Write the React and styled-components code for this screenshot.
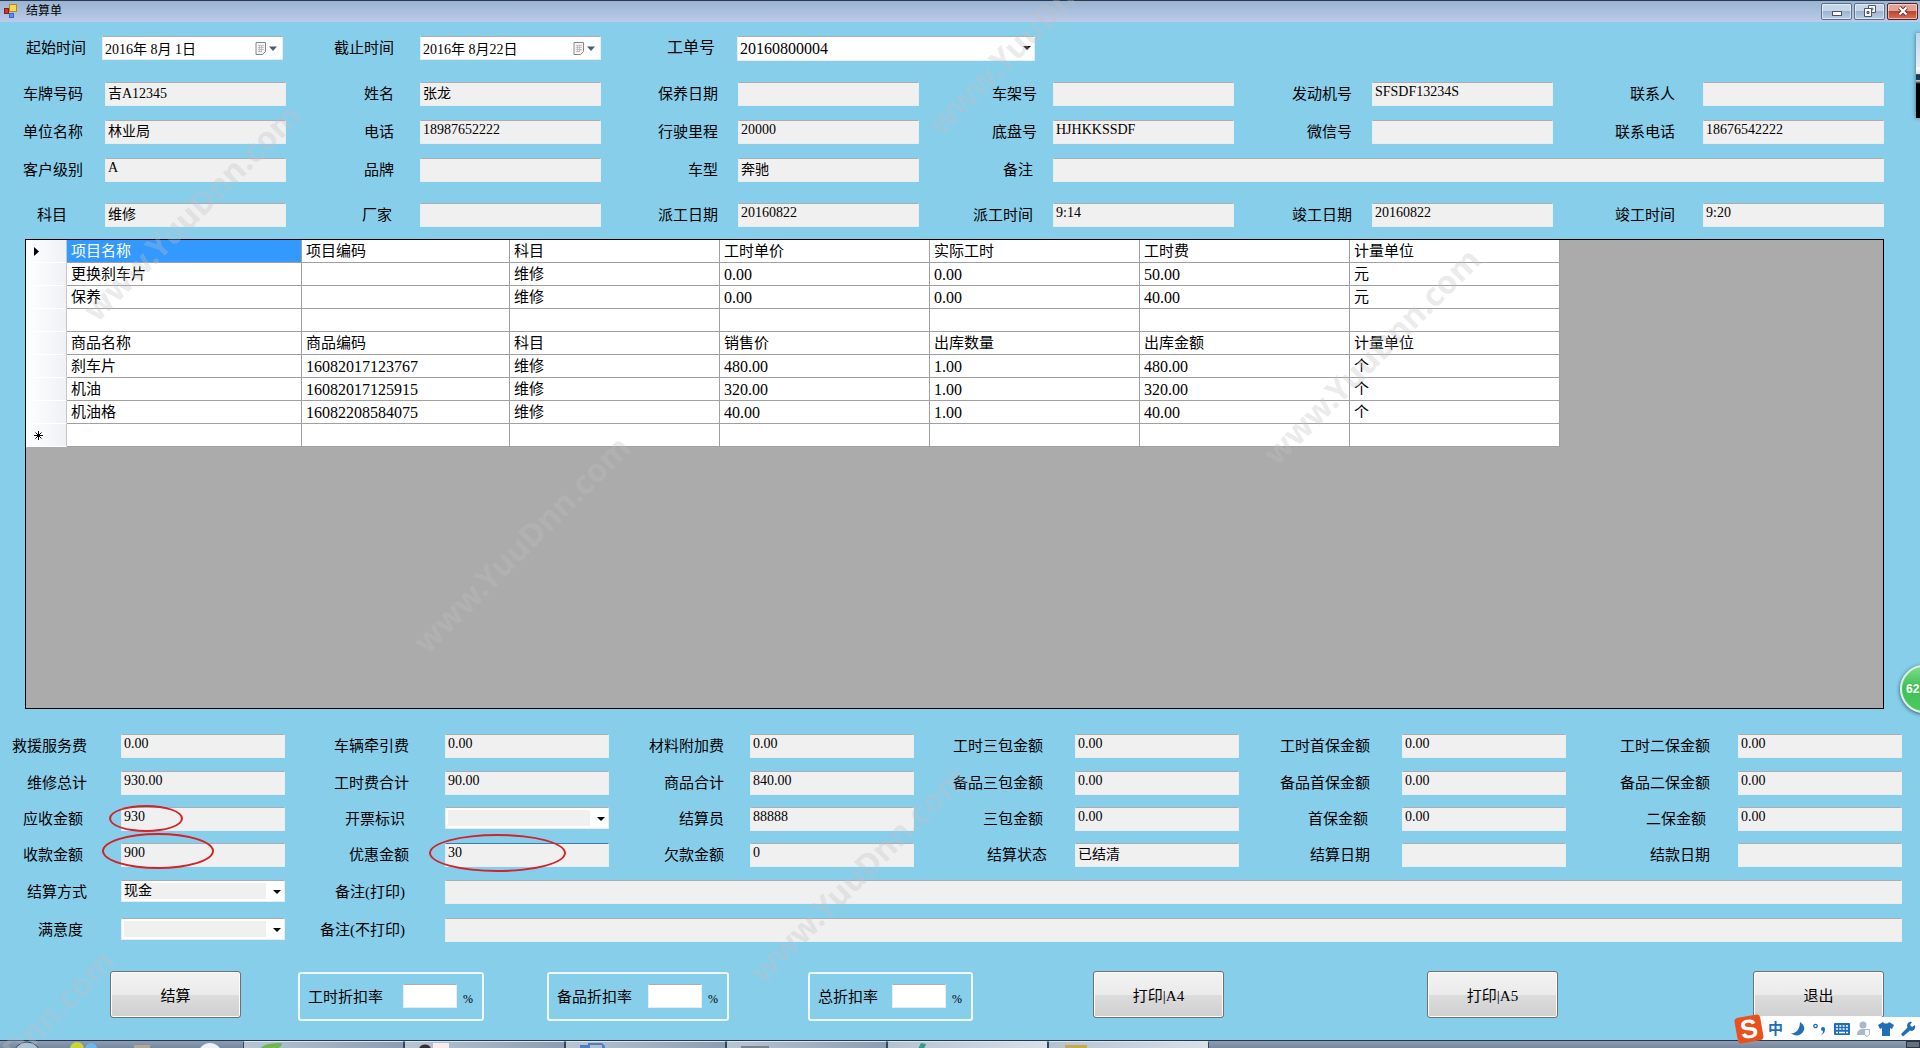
import React from "react";
import styled, { createGlobalStyle, css } from "styled-components";

const topColumns = "105fr 181fr 134fr 181fr 137fr 181fr 134fr 181fr 138fr 181fr 150fr 181fr 36fr";
const filterColumns = "102fr 181fr 137fr 181fr 136fr 298fr 885fr";
const bottomColumns = "121fr 164fr 160fr 164fr 141fr 164fr 161fr 164fr 163fr 164fr 172fr 164fr 18fr";

const customerRows = [
  { id: "plate", label: "车牌号码", value: "吉A12345", gap: 22 },
  { id: "name", label: "姓名", value: "张龙", gap: 26 },
  { id: "careDate", label: "保养日期", value: "", gap: 20 },
  { id: "frameNo", label: "车架号", value: "", gap: 16 },
  { id: "engineNo", label: "发动机号", value: "SFSDF13234S", gap: 20 },
  { id: "contact", label: "联系人", value: "", gap: 28 },
  { id: "company", label: "单位名称", value: "林业局", gap: 22 },
  { id: "phone", label: "电话", value: "18987652222", gap: 26 },
  { id: "mileage", label: "行驶里程", value: "20000", gap: 20 },
  { id: "chassis", label: "底盘号", value: "HJHKKSSDF", gap: 16 },
  { id: "wechat", label: "微信号", value: "", gap: 20 },
  { id: "contactPhone", label: "联系电话", value: "18676542222", gap: 28 },
  { id: "level", label: "客户级别", value: "A", gap: 22 },
  { id: "brand", label: "品牌", value: "", gap: 26 },
  { id: "model", label: "车型", value: "奔驰", gap: 20 },
  { id: "remark", label: "备注", value: "", gap: 20, span: 5 },
];

const workRow = [
  { id: "subject", label: "科目", value: "维修", gap: 38 },
  { id: "factory", label: "厂家", value: "", gap: 28 },
  { id: "dispatchDate", label: "派工日期", value: "20160822", gap: 20 },
  { id: "dispatchTime", label: "派工时间", value: "9:14", gap: 20 },
  { id: "finishDate", label: "竣工日期", value: "20160822", gap: 20 },
  { id: "finishTime", label: "竣工时间", value: "9:20", gap: 28 },
];

const settleRows = [
  { id: "rescue", label: "救援服务费", value: "0.00", gap: 34 },
  { id: "tow", label: "车辆牵引费", value: "0.00", gap: 36 },
  { id: "material", label: "材料附加费", value: "0.00", gap: 26 },
  { id: "hourSb", label: "工时三包金额", value: "0.00", gap: 32 },
  { id: "hourFirst", label: "工时首保金额", value: "0.00", gap: 32 },
  { id: "hourSecond", label: "工时二保金额", value: "0.00", gap: 28 },
  { id: "repairTotal", label: "维修总计", value: "930.00", gap: 34 },
  { id: "hourTotal", label: "工时费合计", value: "90.00", gap: 36 },
  { id: "goodsTotal", label: "商品合计", value: "840.00", gap: 26 },
  { id: "partSb", label: "备品三包金额", value: "0.00", gap: 32 },
  { id: "partFirst", label: "备品首保金额", value: "0.00", gap: 32 },
  { id: "partSecond", label: "备品二保金额", value: "0.00", gap: 28 },
  { id: "receivable", label: "应收金额", value: "930", gap: 38, mark: { x: -12, y: -2, w: 74, h: 27 } },
  { id: "invoice", label: "开票标识", value: "", gap: 40, select: true },
  { id: "clerk", label: "结算员", value: "88888", gap: 26 },
  { id: "sb", label: "三包金额", value: "0.00", gap: 32 },
  { id: "first", label: "首保金额", value: "0.00", gap: 34 },
  { id: "second", label: "二保金额", value: "0.00", gap: 32 },
  { id: "received", label: "收款金额", value: "900", gap: 38, mark: { x: -19, y: -10, w: 112, h: 36 } },
  { id: "discount", label: "优惠金额", value: "30", gap: 36, active: true, mark: { x: -16, y: -9, w: 137, h: 38 } },
  { id: "debt", label: "欠款金额", value: "0", gap: 26 },
  { id: "status", label: "结算状态", value: "已结清", gap: 28 },
  { id: "settleDate", label: "结算日期", value: "", gap: 32 },
  { id: "payDate", label: "结款日期", value: "", gap: 28 },
  { id: "payType", label: "结算方式", value: "现金", gap: 34, select: true },
  { id: "printNote", label: "备注(打印)", value: "", gap: 40, span: 9 },
  { id: "satisfied", label: "满意度", value: "", gap: 38, select: true },
  { id: "innerNote", label: "备注(不打印)", value: "", gap: 40, span: 9 },
];

const gridRows = [
  ["项目名称", "项目编码", "科目", "工时单价", "实际工时", "工时费", "计量单位"],
  ["更换刹车片", "", "维修", "0.00", "0.00", "50.00", "元"],
  ["保养", "", "维修", "0.00", "0.00", "40.00", "元"],
  ["", "", "", "", "", "", ""],
  ["商品名称", "商品编码", "科目", "销售价", "出库数量", "出库金额", "计量单位"],
  ["刹车片", "16082017123767", "维修", "480.00", "1.00", "480.00", "个"],
  ["机油", "16082017125915", "维修", "320.00", "1.00", "320.00", "个"],
  ["机油格", "16082208584075", "维修", "40.00", "1.00", "40.00", "个"],
  ["", "", "", "", "", "", ""],
];

const watermarks = [
  { x: 100, y: 326 },
  { x: 430, y: 658 },
  { x: 1280, y: 470 },
  { x: 766, y: 988 },
  { x: 944, y: 140 },
  { x: -86, y: 1172 },
];

const tasks = ["leaf", "user", "doc", "disk", "pen", "form"];

const isNumber = (text) => /^[\d.]+$/.test(text);

const Arrow = () => (
  <ArrowIcon viewBox="0 0 8 4" aria-hidden="true">
    <path d="M0 0h8L4 4z" fill="#000" />
  </ArrowIcon>
);

const Field = ({ field }) => (
  <>
    <Label htmlFor={field.id} $gap={field.gap}>
      {field.label}
    </Label>
    <Cell $span={field.span}>
      {field.select ? (
        <>
          <Select id={field.id} defaultValue={field.value}>
            <option value={field.value}>{field.value}</option>
          </Select>
          <Arrow />
        </>
      ) : (
        <Input id={field.id} defaultValue={field.value} $active={field.active} />
      )}
      {field.mark && <Mark $m={field.mark} />}
    </Cell>
  </>
);

const DateField = ({ id, label, value, gap }) => (
  <>
    <Label htmlFor={id} $gap={gap}>
      {label}
    </Label>
    <Cell>
      <DateInput id={id} defaultValue={value} />
      <CalendarIcon viewBox="0 0 22 13" aria-hidden="true">
        <path d="M1 .5h9.500v9l-3 3H1z" fill="#f4f4f4" stroke="#8d8682" />
        <path d="M3 3.500h6M3 5.500h6M3 7.500h6M3 9.500h4M4.500 3v7M6.500 3v7" stroke="#b3b6bb" strokeWidth=".8" />
        <path d="M14 4.500h8l-4 4.500z" fill="#44617a" />
      </CalendarIcon>
    </Cell>
  </>
);

const Discount = ({ id, label, col }) => (
  <Group $col={col}>
    <label htmlFor={id}>{label}</label>
    <RateInput id={id} />
    <Percent>%</Percent>
  </Group>
);

const App = () => {
  return (
    <>
      <GlobalStyle />
      <Window>
        <TitleBar>
          <svg width="14" height="14" viewBox="0 0 14 14" aria-hidden="true">
            <rect x="5.500" y=".5" width="7" height="7" fill="#fbd54a" stroke="#b58a1c" />
            <rect x=".5" y="4.500" width="4" height="5" fill="#c8362c" stroke="#8a1d18" />
            <rect x="5.500" y="9.500" width="4" height="4" fill="#5c8ff0" stroke="#3a62c8" />
          </svg>
          <Title>结算单</Title>
          <WinButton aria-label="最小化">
            <svg width="12" height="12" viewBox="0 0 12 12">
              <rect x="1.500" y="6.500" width="9" height="4" fill="#fff" stroke="#4a5568" />
            </svg>
          </WinButton>
          <WinButton aria-label="还原">
            <svg width="12" height="12" viewBox="0 0 12 12">
              <path d="M4.500 .5h7v7h-7z" fill="#fff" stroke="#4a5568" />
              <path d="M7 3h2v2H7z" fill="#8fa3bd" stroke="#4a5568" strokeWidth=".6" />
              <path d="M.5 3.500h7v8h-7z" fill="#fff" stroke="#4a5568" />
              <path d="M3 6.500h2v2H3z" fill="#8fa3bd" stroke="#4a5568" />
            </svg>
          </WinButton>
          <WinButton aria-label="关闭" $close>
            <svg width="12" height="12" viewBox="0 0 12 12">
              <path d="M2.500 2.500l7 7M9.500 2.500l-7 7" stroke="#5b2a2a" strokeWidth="4" />
              <path d="M2.500 2.500l7 7M9.500 2.500l-7 7" stroke="#fff" strokeWidth="2.400" />
            </svg>
          </WinButton>
        </TitleBar>

        <FormGrid $cols={filterColumns} $top={14}>
          <DateField id="from" label="起始时间" value="2016年 8月 1日" gap={16} />
          <DateField id="to" label="截止时间" value="2016年 8月22日" gap={26} />
          <BigLabel htmlFor="order" $gap={22}>
            工单号
          </BigLabel>
          <Cell>
            <OrderSelect id="order">
              <option>20160800004</option>
            </OrderSelect>
            <Arrow />
          </Cell>
        </FormGrid>
        <FormGrid $cols={topColumns} $top={22}>
          {customerRows.map((field) => (
            <Field key={field.id} field={field} />
          ))}
        </FormGrid>
        <FormGrid $cols={topColumns} $top={21}>
          {workRow.map((field) => (
            <Field key={field.id} field={field} />
          ))}
        </FormGrid>

        <GridPanel>
          <Table>
            <colgroup>
              <Col $w={41} />
              <Col $w={235} />
              <Col $w={208} />
              <Col $w={210} />
              <Col $w={210} />
              <Col $w={210} />
              <Col $w={210} />
              <Col $w={210} />
            </colgroup>
            <tbody>
              {gridRows.map((row, i) => (
                <tr key={i}>
                  <RowHead>
                    {i === 0 && (
                      <svg width="5" height="9" viewBox="0 0 5 9" aria-hidden="true">
                        <path d="M0 0l5 4.500L0 9z" />
                      </svg>
                    )}
                    {i === gridRows.length - 1 && (
                      <svg width="9" height="9" viewBox="0 0 9 9" aria-hidden="true">
                        <path d="M4.500 0v9M0 4.500h9M1.500 1.500l6 6M7.500 1.500l-6 6" stroke="#000" />
                      </svg>
                    )}
                  </RowHead>
                  {row.map((text, j) => (
                    <Td key={j} $selected={i === 0 && j === 0} $num={isNumber(text)}>
                      {text}
                    </Td>
                  ))}
                </tr>
              ))}
            </tbody>
          </Table>
        </GridPanel>

        <SettleGrid $cols={bottomColumns} $top={25}>
          {settleRows.map((field) => (
            <Field key={field.id} field={field} />
          ))}
        </SettleGrid>

        <Actions>
          <Button $col={2}>结算</Button>
          <Discount id="hourRate" label="工时折扣率" col={4} />
          <Discount id="partRate" label="备品折扣率" col={6} />
          <Discount id="totalRate" label="总折扣率" col={8} />
          <Button $col={10}>打印|A4</Button>
          <Button $col={12}>打印|A5</Button>
          <Button $col={14}>退出</Button>
        </Actions>

        <TaskBar>
          <QuickIcons viewBox="0 0 243 7" aria-hidden="true">
            <circle cx="27" cy="15" r="14" fill="#a9c3d6" stroke="#31465c" />
            <circle cx="77" cy="8" r="7" fill="#c9d63a" />
            <circle cx="91" cy="8" r="6" fill="#6cb6ea" />
            <rect x="134" y="4" width="16" height="4" fill="#b9a596" />
            <circle cx="210" cy="14" r="12" fill="#eef3f7" />
          </QuickIcons>
          {tasks.map((task, i) => (
            <Task key={task} $light={i > 3}>
              <TaskIcon name={task} />
            </Task>
          ))}
          <TrayEnd />
        </TaskBar>

        <EdgePreview />
        <Ball>62</Ball>
        <ImeBar>
          <ImeLogo>S</ImeLogo>
          <ImeText>中</ImeText>
          <svg width="16" height="16" viewBox="0 0 16 16" aria-hidden="true">
            <path d="M10 1c3 2 5 5 4 8-2 6-9 7-13 3 5 1 9-4 9-11z" fill="#1e6fb8" />
          </svg>
          <svg width="16" height="16" viewBox="0 0 16 16" aria-hidden="true">
            <circle cx="3.500" cy="5" r="1.700" fill="none" stroke="#1e6fb8" strokeWidth="1.300" />
            <path d="M9 8a2 2 0 1 1 4 0c0 3-1 5-4 6 1-1 2-2 2-4-1 0-2-1-2-2z" fill="#1e6fb8" />
          </svg>
          <svg width="16" height="16" viewBox="0 0 16 16" aria-hidden="true">
            <rect y="2" width="16" height="12" rx="1" fill="#1e6fb8" />
            <path d="M2 5h12M2 8h12" stroke="#fff" strokeWidth="1.600" strokeDasharray="2 1.300" />
            <path d="M2 11.500h2M5 11.500h6M12 11.500h2" stroke="#fff" strokeWidth="1.600" />
          </svg>
          <svg width="16" height="16" viewBox="0 0 16 16" aria-hidden="true">
            <circle cx="7" cy="4" r="3.500" fill="#a9b8c8" />
            <path d="M1 14c0-5 3-6 6-6s5 1 6 6z" fill="#a9b8c8" />
            <path d="M8.500 8.500h5v5l-2.500 2-2.500-2z" fill="#f3f5f8" stroke="#a9b8c8" />
          </svg>
          <svg width="16" height="16" viewBox="0 0 16 16" aria-hidden="true">
            <path d="M5 1c1 2 5 2 6 0l5 3-2 4-2-1v8H4V7L2 8 0 4z" fill="#1e6fb8" />
          </svg>
          <svg width="16" height="16" viewBox="0 0 16 16" aria-hidden="true">
            <path d="M15 4l-3 2-2-2 2-3C9 0 6 3 7.500 6.500L1 13l2 2.500 7-6C13 11 16 8 15 4z" fill="#1e6fb8" />
          </svg>
        </ImeBar>

        <Overlay aria-hidden="true">
          {watermarks.map((w) => (
            <Watermark key={w.x} $x={w.x} $y={w.y}>
              www.YuuDnn.com
            </Watermark>
          ))}
        </Overlay>
      </Window>
    </>
  );
};

const TaskIcon = ({ name }) => (
  <TaskSvg viewBox="0 0 40 7" aria-hidden="true">
    {name === "leaf" && <path d="M2 7C5 2 14 1 24 1c0 3-3 5-5 6l-4-1 6-3-9 4z" fill="#6db84e" />}
    {name === "user" && (
      <>
        <rect x="14" y="1" width="16" height="6" fill="#f6eeee" />
        <path d="M0 7c1-6 11-6 12 0z" fill="#3a2a2c" />
      </>
    )}
    {name === "doc" && <path d="M0 7V3h8V1h14l3 3v3h-3V3H10v4z" fill="#4d7fc0" />}
    {name === "disk" && <path d="M0 4h28v3H0z" fill="#7b828c" />}
    {name === "pen" && <path d="M16 7l3-6 5 1-2 5z" fill="#2f9c8c" />}
    {name === "form" && <path d="M2 3h22v4H2z" fill="#c7a94e" />}
  </TaskSvg>
);

export default App;

const fontStack = `"Liberation Serif", "Noto Sans CJK SC", serif`;

const GlobalStyle = createGlobalStyle`
  * {
    box-sizing: border-box;
  }
  body {
    margin: 0;
    background: #87ceeb;
    color: #000;
    font-family: ${fontStack};
    font-size: 15px;
  }
  input, select, button {
    font-family: inherit;
    color: inherit;
    margin: 0;
  }
`;

const Window = styled.div`
  position: relative;
  display: flex;
  flex-direction: column;
  min-height: 100vh;
  overflow: hidden;
  background: #87ceeb;
`;

const TitleBar = styled.header`
  display: flex;
  align-items: center;
  gap: 2px;
  height: 22px;
  padding: 0 2px 1px 4px;
  border-top: 1px solid #2b3a52;
  background: linear-gradient(#99b4d1, #a9c0de 50%, #bccbe8);
`;

const Title = styled.h1`
  flex: 1;
  margin: 0;
  padding-left: 6px;
  font-size: 12px;
  font-weight: normal;
  line-height: 16px;
`;

const WinButton = styled.button`
  display: flex;
  align-items: center;
  justify-content: center;
  width: 31px;
  height: 17px;
  padding: 0;
  border: 1px solid #5b6f8d;
  border-radius: 2px;
  box-shadow: inset 0 0 0 1px rgba(255, 255, 255, 0.5);
  background: linear-gradient(#c6d6e9 50%, #9db3cf 50%, #bccde3);
  ${({ $close }) =>
    $close &&
    css`
      border-color: #5a1f22;
      background: linear-gradient(#e2a294 50%, #c0432c 50%, #d5735a);
    `}
`;

const FormGrid = styled.section`
  display: grid;
  grid-template-columns: ${({ $cols }) => $cols};
  grid-auto-rows: 24px;
  row-gap: 14px;
  margin-top: ${({ $top }) => $top}px;
`;

const SettleGrid = styled(FormGrid)`
  grid-template-rows: 25px 24px 24px 25px 26px 25px;
  row-gap: 12px;
`;

const Label = styled.label`
  padding-right: ${({ $gap }) => $gap}px;
  line-height: 24px;
  text-align: right;
  white-space: nowrap;
  /* every line of the form starts with a label in the first track */
  &:nth-of-type(6n + 1) {
    grid-column-start: 1;
  }
  ${SettleGrid} &:nth-of-type(27) {
    grid-column-start: 1;
  }
`;

const BigLabel = styled(Label)`
  font-size: 16px;
`;

const Cell = styled.div`
  position: relative;
  min-width: 0;
  grid-column-end: span ${({ $span }) => $span || 1};
`;

const Input = styled.input`
  display: block;
  width: 100%;
  height: 24px;
  padding: 0 2px 4px;
  border: 1px solid #e6eef2;
  border-top-color: ${({ $active }) => ($active ? "#3d7bad" : "#abadb3")};
  border-radius: 1px;
  background: #f0f0f0;
  font-size: 14px;
  line-height: 18px;
  outline: none;
`;

const DateInput = styled(Input)`
  padding-bottom: 0;
  background: #fff;
`;

const Select = styled.select`
  display: block;
  width: 100%;
  height: 22px;
  padding: 0 20px 1px 2px;
  border: 1px solid #e6eef2;
  border-top-color: #abadb3;
  border-radius: 1px;
  appearance: none;
  background: linear-gradient(#f0f0f0, #f0f0f0) 2px 2px / calc(100% - 20px) calc(100% - 4px) no-repeat #fff;
  font-size: 14px;
  outline: none;
`;

const OrderSelect = styled(Select)`
  height: 25px;
  background: #fff;
  font-size: 16px;
`;

const ArrowIcon = styled.svg`
  position: absolute;
  top: 10px;
  right: 4px;
  width: 8px;
  height: 4px;
  pointer-events: none;
`;

const CalendarIcon = styled.svg`
  position: absolute;
  top: 6px;
  right: 6px;
  width: 22px;
  height: 13px;
  pointer-events: none;
`;

const Mark = styled.span`
  position: absolute;
  left: ${({ $m }) => $m.x}px;
  top: ${({ $m }) => $m.y}px;
  width: ${({ $m }) => $m.w}px;
  height: ${({ $m }) => $m.h}px;
  border: 2px solid #d2232a;
  border-radius: 50%;
  pointer-events: none;
`;

const GridPanel = styled.main`
  flex: 1;
  min-height: 240px;
  margin: 12px 36px 0 25px;
  border: 1px solid #000;
  background: #ababab;
  overflow: hidden;
`;

const Table = styled.table`
  width: 1534px;
  table-layout: fixed;
  border-collapse: separate;
  border-spacing: 0;
  background: #fff;
`;

const Col = styled.col`
  width: ${({ $w }) => $w}px;
`;

const RowHead = styled.th`
  height: 23px;
  padding: 0 0 0 8px;
  border-right: 1px solid #c4c6c8;
  border-bottom: 1px solid #fff;
  background: linear-gradient(90deg, #fff, #eff1f4);
  text-align: left;
  svg {
    display: block;
  }
`;

const Td = styled.td`
  height: 23px;
  padding: 1px 4px 0;
  border-right: 1px solid #a0a0a0;
  border-bottom: 1px solid #a0a0a0;
  font-size: ${({ $num }) => ($num ? 16 : 15)}px;
  line-height: 21px;
  white-space: nowrap;
  background: ${({ $selected }) => ($selected ? "#3399ff" : "#fff")};
  color: ${({ $selected }) => ($selected ? "#fff" : "#000")};
`;

const Actions = styled.section`
  display: grid;
  grid-template-columns: 110fr 131fr 57fr 186fr 63fr 182fr 79fr 165fr 120fr 131fr 203fr 131fr 195fr 131fr 36fr;
  grid-template-rows: 50px;
  margin: 28px 0 19px;
`;

const Button = styled.button`
  grid-column: ${({ $col }) => $col};
  height: 47px;
  padding: 0;
  border: 1px solid #707070;
  border-radius: 3px;
  box-shadow: inset 0 0 0 1px #fcfcfc;
  background: linear-gradient(#f2f2f2, #ebebeb 50%, #dddddd 50%, #cfcfcf);
  font-size: 15px;
  cursor: pointer;
`;

const Group = styled.div`
  grid-column: ${({ $col }) => $col};
  display: flex;
  align-items: center;
  min-width: 0;
  margin-top: 1px;
  padding: 0 9px 2px 8px;
  border: 2px solid #eef8fc;
  border-radius: 3px;
  white-space: nowrap;
`;

const RateInput = styled.input`
  width: 54px;
  height: 24px;
  && {
    margin: 0 6px 0 auto;
  }
  border: 1px solid #e6eef2;
  border-top-color: #abadb3;
  background: #fff;
`;

const Percent = styled.span`
  padding-top: 8px;
  font-size: 12px;
`;

const TaskBar = styled.footer`
  display: flex;
  height: 8px;
  border-top: 1px solid #26354a;
  background: linear-gradient(#8d9db3, #76889f);
  overflow: hidden;
`;

const QuickIcons = styled.svg`
  width: 243px;
  height: 7px;
`;

const Task = styled.span`
  width: 161px;
  height: 10px;
  padding-left: 14px;
  border: 1px solid #34455b;
  border-top-color: #dfe6ee;
  border-radius: 2px;
  background: ${({ $light }) =>
    $light ? "linear-gradient(90deg, #b4c2d0, #d9e0e7)" : "linear-gradient(90deg, #b8c6d4, #8c9db2)"};
`;

const TaskSvg = styled.svg`
  display: block;
  width: 40px;
  height: 7px;
`;

const TrayEnd = styled.span`
  width: 14px;
  margin-left: auto;
  border: 1px solid #2c3642;
  background: #66717f;
`;

const EdgePreview = styled.div`
  position: absolute;
  top: 33px;
  right: 0;
  width: 4px;
  height: 85px;
  box-shadow: 0 0 4px rgba(0, 0, 0, 0.5);
  background: linear-gradient(#b9d9ee, #e8eff4 40%, #fff 41%, #d8dde2 48%, #16324f 49%, #1d3d63 55%, #cfd6dc 56%, #000 60%, #000);
`;

const Ball = styled.div`
  position: absolute;
  top: 665px;
  right: -28px;
  width: 48px;
  height: 48px;
  padding-left: 4px;
  border: 2px solid #d9f2dd;
  border-radius: 50%;
  box-shadow: 0 1px 4px rgba(0, 0, 0, 0.6);
  background: linear-gradient(#7fdc8c, #3fbf56 45%, #4fc963);
  color: #fff;
  font-family: "Liberation Sans", sans-serif;
  font-size: 12px;
  font-weight: bold;
  line-height: 44px;
`;

const ImeBar = styled.div`
  position: absolute;
  right: 0;
  bottom: 8px;
  display: flex;
  align-items: center;
  gap: 6px;
  height: 23px;
  padding-right: 4px;
  background: linear-gradient(90deg, transparent 22px, #fff 22px);
`;

const ImeLogo = styled.span`
  width: 26px;
  height: 26px;
  border-radius: 4px;
  background: #e8501e;
  color: #fff;
  font-family: "Liberation Sans", sans-serif;
  font-size: 26px;
  font-weight: bold;
  line-height: 26px;
  text-align: center;
  transform: rotate(-10deg);
`;

const ImeText = styled.span`
  width: 16px;
  color: #1e6fb8;
  font-size: 15px;
  font-weight: bold;
  line-height: 22px;
`;

const Overlay = styled.div`
  position: absolute;
  inset: 0;
  overflow: hidden;
  pointer-events: none;
`;

const Watermark = styled.span`
  position: absolute;
  left: ${({ $x }) => $x}px;
  top: ${({ $y }) => $y - 32}px;
  color: rgba(192, 192, 196, 0.32);
  font-family: "Noto Sans", sans-serif;
  font-size: 32px;
  font-weight: bold;
  line-height: 32px;
  white-space: nowrap;
  transform: rotate(-45deg);
  transform-origin: 0 100%;
`;
